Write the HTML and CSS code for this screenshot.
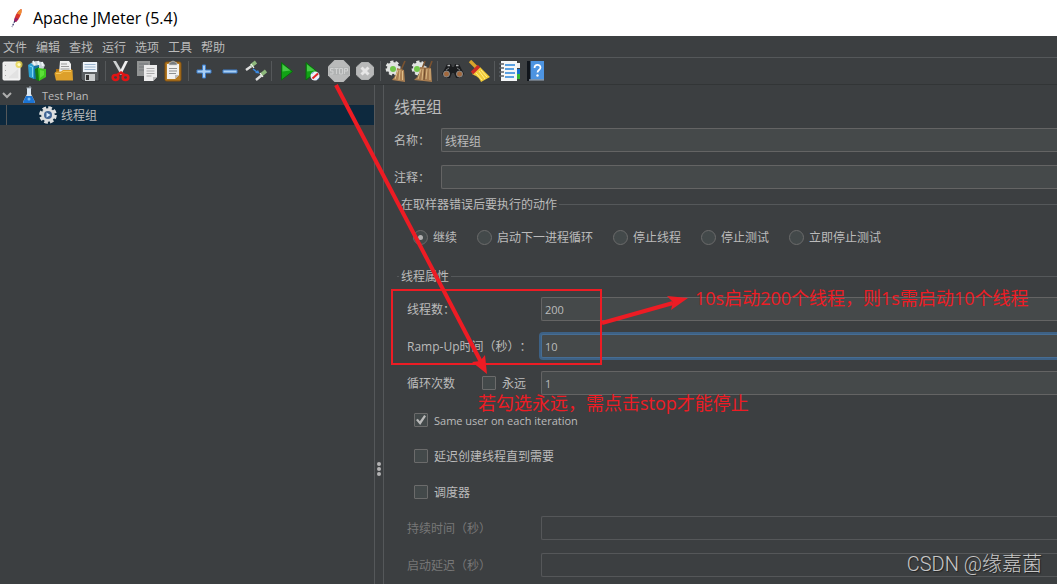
FILE: index.html
```html
<!DOCTYPE html>
<html lang="zh-CN">
<head>
<meta charset="utf-8">
<title>Apache JMeter (5.4)</title>
<link rel="stylesheet" href="styles.css">
</head>
<body>
<header class="titlebar">
  <svg class="feather" viewBox="0 0 14 22" aria-hidden="true">
    <path d="M11.5 2C8 3 5 8 4 14l2 1c3-3 6-8 5.500-13z" fill="#d8342c"/>
    <path d="M11.500 2c-2 .8-3.500 2.500-4.500 4.500l3.500 1.500c1-2 1.500-4 1-6z" fill="#ee8a32"/>
    <path d="M5 10.500 4 14l2 1 2.500-3z" fill="#982269"/>
    <path d="M4.800 14 2 20" stroke="#333066" stroke-width="1.200" stroke-dasharray="2 1"/>
  </svg>
  <h1 class="title">Apache JMeter (5.4)</h1>
</header>

<nav class="menubar">
  <button class="menu">文件</button>
  <button class="menu">编辑</button>
  <button class="menu">查找</button>
  <button class="menu">运行</button>
  <button class="menu">选项</button>
  <button class="menu">工具</button>
  <button class="menu">帮助</button>
</nav>

<div class="toolbar" role="toolbar">
  <button class="tool" aria-label="新建"><svg viewBox="0 0 22 22"><rect x="2" y="2" width="17" height="18" rx="1" fill="#ececec" stroke="#fafafa"/><path d="M4.500 5v13" stroke="#aaa" stroke-dasharray="1 4"/><path d="M8 17l9-8v9H8z" fill="#e2e2e2"/><circle cx="18" cy="4.500" r="3.500" fill="#e8d64a" opacity=".8"/><circle cx="18" cy="4.500" r="1.600" fill="#fffbc0"/></svg></button>
  <button class="tool" aria-label="模板"><svg viewBox="0 0 22 22"><path d="M4 3l5-2 6 1 3 3-2 5H3z" fill="#c9d3d8"/><path d="M6 1l2 4M11 1l1 4M15 2l1 4" stroke="#eef4f6" stroke-width="2"/><path d="M1 5l3-2 3 3v13l-5-2z" fill="#2b9fd0"/><path d="M7 6l5-1v14H7z" fill="#1672a2"/><path d="M2.500 6l3 1v10" fill="none" stroke="#7dd4f0"/><path d="M8 9l4-2v14l-3-1z" fill="#137913"/><path d="M11 8l8 1v8l-7 4z" fill="#3ec51f"/><path d="M13 10l4 1v4l-4 3z" fill="#5cdf38"/></svg></button>
  <button class="tool" aria-label="打开"><svg viewBox="0 0 22 22"><path d="M3 9h16v10H3z" fill="#a86e10"/><path d="M7 1h9l2 3v9H6z" fill="#eee"/><path d="M8 4h6M8 6.500h8M7.500 9h9" stroke="#999"/><path d="M1.500 14c0-1.500 1-2.500 2.500-2.500h4l2-1.500h9.500L20 20.500H3z" fill="#dda02a"/><path d="M3 13.500h5l2-2h8" fill="none" stroke="#f5c75c"/></svg></button>
  <button class="tool" aria-label="保存"><svg viewBox="0 0 22 22"><path d="M2 2h18v19H4l-2-2z" fill="#595d60" stroke="#303234"/><path d="M4 2h14v10H4z" fill="#edf3f9"/><path d="M5.500 4.500h11M5.500 7h11M5.500 9.500h11" stroke="#99b3cd"/><path d="M6 14h10v7H6z" fill="#c9cccd"/><path d="M7 15h3v5H7z" fill="#333"/></svg></button>
  <span class="sep"></span>
  <button class="tool" aria-label="剪切"><svg viewBox="0 0 22 22"><path d="M3 1h3l7 12-2 2z" fill="#cfd2d3"/><path d="M18 1h-3L9 13l2 2z" fill="#f0f0f0"/><g fill="none" stroke="#df1414" stroke-width="2.600"><ellipse cx="5.500" cy="17.500" rx="2.800" ry="2.500"/><ellipse cx="15.500" cy="17.500" rx="2.800" ry="2.500"/><path d="M7 15l4-2.500 3.500 2.500"/></g></svg></button>
  <button class="tool" aria-label="复制"><svg viewBox="0 0 22 22"><path d="M1 1h13v15H1z" fill="#929494"/><path d="M3 4h9M3 7h5M3 10h5" stroke="#73777a"/><path d="M8 5h13v12l-4 4H8z" fill="#ececec"/><path d="M10.500 8.500h8M10.500 11h8M10.500 13.500h8M10.500 16h5" stroke="#aaa"/><path d="M17 21v-4h4z" fill="#bbb"/></svg></button>
  <button class="tool" aria-label="粘贴"><svg viewBox="0 0 22 22"><rect x="3" y="2" width="16" height="19" rx="1.500" fill="#b57a21" stroke="#85520f"/><path d="M5 4h12v11l-4 4H5z" fill="#f0f0ee"/><path d="M7 8.500h8M7 11h8M7 13.500h7" stroke="#8d8f90"/><path d="M13 19v-4h4z" fill="#bbb"/><path d="M7 5V3l2-1q2-2 4 0l2 1v2z" fill="#777b7d" stroke="#d5d5d5" stroke-width=".6"/></svg></button>
  <span class="sep"></span>
  <button class="tool" aria-label="展开"><svg viewBox="0 0 22 22"><path d="M9.500 5h3v5H18v3h-5.500v5h-3v-5H4v-3h5.500z" fill="#a9cff3" stroke="#3d7cc8"/></svg></button>
  <button class="tool" aria-label="折叠"><svg viewBox="0 0 22 22"><path d="M4 10h14v3H4z" fill="#a9cff3" stroke="#3d7cc8"/></svg></button>
  <button class="tool" aria-label="切换"><svg viewBox="0 0 22 22"><path d="M1 10l7-5M11 20l6-5" stroke="#dedede" stroke-width="2.400"/><path d="M6 6l5-4M16 15l5-4" stroke="#8eb97c" stroke-width="3.600"/><path d="M6 4l3 4M15 13l3 4" stroke="#f2f2f2" stroke-width="1.200"/><path d="M8 9l4 3" stroke="#3a88e0" stroke-width="1.500"/><path d="M14.500 13.500l-4.500-.5 3-3z" fill="#3a88e0"/></svg></button>
  <span class="sep"></span>
  <button class="tool" aria-label="启动"><svg viewBox="0 0 22 22"><path d="M5.500 2.500l11 9L5.500 20z" fill="#11a315" stroke="#096b0d"/><path d="M6.500 4.500l8 6-8 1z" fill="#46c946"/></svg></button>
  <button class="tool" aria-label="无间隔启动"><svg viewBox="0 0 22 22"><path d="M4 2.500l11 9L4 20z" fill="#11a315" stroke="#096b0d"/><path d="M5 4.500l8 6-8 1z" fill="#46c946"/><circle cx="13" cy="16" r="4.500" fill="#e9eef9"/><path d="M10.500 18.500l5.500-5" stroke="#df2424" stroke-width="2"/><path d="M9.500 14l2-2M15 20l2-2" stroke="#568acf"/></svg></button>
  <button class="tool" aria-label="停止" disabled><svg viewBox="0 0 22 22"><path d="M6.500 0h9L22 6.500v9L15.500 22h-9L0 15.500v-9z" fill="#b9baba"/><path d="M1 7h20v8H1z" fill="#b1b3b3"/><g fill="none" stroke="#cfd0d0"><path d="M5.500 8.500h-3V11h2.500v3H2M6.500 8.500h4M8.500 8.500V14M11.500 8.500h3V14h-3zM16.500 14V8.500h3V11h-3"/></g></svg></button>
  <button class="tool" aria-label="关闭" disabled><svg viewBox="0 0 22 22"><path d="M7.500 2.500h7L19.500 7v8l-5 4.500h-7L2.500 15V7z" fill="#b8b9b9" stroke="#b0b2b2"/><path d="M7.500 7.500l7 7M14.500 7.500l-7 7" stroke="#e6e6e6" stroke-width="3"/></svg></button>
  <span class="sep"></span>
  <button class="tool" aria-label="清除"><svg viewBox="0 0 22 22"><circle cx="8" cy="8" r="6" fill="#e1e3e1" stroke="#e1e3e1" stroke-width="3" stroke-dasharray="3 2"/><circle cx="8" cy="9" r="3" fill="#72c64a"/><path d="M20 1l-4 9" stroke="#7b5330" stroke-width="1.600"/><path d="M12 8l7 2 1 12c-4-1-9-1-13-2 3-3 5-7 5-12z" fill="#ac8153"/><path d="M13 10l-3 9M15 10l-1 10M17.500 11v9" stroke="#dfbf89"/></svg></button>
  <button class="tool" aria-label="清除全部"><svg viewBox="0 0 22 22"><circle cx="8" cy="8" r="6" fill="#e1e3e1" stroke="#e1e3e1" stroke-width="3" stroke-dasharray="3 2"/><circle cx="6" cy="9" r="3" fill="#72c64a"/><path d="M14 1l-3 8M21 1l-3 8" stroke="#7b5330" stroke-width="1.600"/><path d="M9 7l11 1 1 14c-5-1-12-1-18-2 4-3 6-7 6-13z" fill="#a77c50"/><path d="M10 9l-3 10M12 9l-1 11M16 9l-1 10M19 9v11" stroke="#dcba84"/><path d="M14 8l-1 12" stroke="#6d4a2b"/></svg></button>
  <span class="sep"></span>
  <button class="tool" aria-label="查找"><svg viewBox="0 0 22 22"><path d="M5 4h4l1 3h2l1-3h4l5 10-4 4h-4l-2-5h-2l-2 5H4l-4-4z" fill="#1b1d1f"/><path d="M5.500 5.500h2.500M14 5.500h2.500" stroke="#b4b6b7" stroke-width="1.500"/><path d="M4 10l3-2M15 8l3 2" stroke="#777a7c"/><circle cx="4.500" cy="14" r="3" fill="#a2683c" stroke="#898b8c"/><circle cx="17.500" cy="14" r="3" fill="#a2683c" stroke="#898b8c"/></svg></button>
  <button class="tool" aria-label="重置查找"><svg viewBox="0 0 22 22"><path d="M2 1l7 7" stroke="#d9a32b" stroke-width="3.400"/><path d="M12 7l10 10-9 5c-2-5-5-6-9-8z" fill="#f1cb38"/><path d="M11 11l6 8M13 10l6 7M8 13l6 7" stroke="#fff08e"/><path d="M4 13l7-7" stroke="#cc2c25" stroke-width="3.500"/></svg></button>
  <span class="sep"></span>
  <button class="tool" aria-label="函数助手"><svg viewBox="0 0 22 22"><path d="M2 1h16v20H2z" fill="#f4f6f7"/><path d="M0 4h5M0 8h5M0 12h5M0 16h5" stroke="#5b6267" stroke-width="1.600"/><path d="M6 5h10M6 9h9M6 13h10M6 17h9" stroke="#2684dc" stroke-width="1.700"/><path d="M18 3h3v5h-3z" fill="#eee"/><path d="M18 9h3v5h-3z" fill="#1770cf"/><path d="M18 14h3v5h-3z" fill="#34b631"/></svg></button>
  <button class="tool" aria-label="帮助"><svg viewBox="0 0 22 22"><path d="M2 1h17v20H2z" fill="#10151b"/><path d="M5.500 1H19v18.500H5.500z" fill="#4d94e1"/><path d="M4 20h15" stroke="#c8d6e4"/><path d="M9.500 8c0-4 6-4 6-.5 0 2.500-3 2.500-3 5" fill="none" stroke="#fff" stroke-width="1.700"/><circle cx="12.500" cy="15.500" r="1.200" fill="#fff"/></svg></button>
</div>

<div class="workspace">
  <aside class="tree" role="tree">
    <div class="node" role="treeitem" aria-expanded="true">
      <svg class="chevron" viewBox="0 0 10 8" aria-hidden="true"><path d="M1 2l4 4 4-4" fill="none" stroke="#adadad" stroke-width="2"/></svg>
      <svg class="flask" viewBox="0 0 14 18" aria-hidden="true"><path d="M5 2h4v6l4 8q0 1-1 1H2q-1 0-1-1l4-8z" fill="#dce8f2"/><path d="M4 10h6l3 6q0 1-1 1H2q-1 0-1-1z" fill="#1c74d3"/><circle cx="7" cy="13" r="1.500" fill="#76bdf6"/><path d="M4.500 2h5M8 0v2" stroke="#a8b4bd"/></svg>
      <span class="latin">Test Plan</span>
    </div>
    <div class="node child" role="treeitem" aria-selected="true">
      <svg class="gear" viewBox="0 0 18 18" aria-hidden="true"><circle cx="9" cy="9" r="7" fill="none" stroke="#dedfdf" stroke-width="3.600" stroke-dasharray="3.500 2"/><circle cx="9" cy="9" r="6.800" fill="#dcdedf"/><circle cx="9" cy="9" r="4" fill="#426594"/><path d="M7.500 6.500l4 2.500-4 2.500z" fill="#d8ebff"/></svg>
      <span>线程组</span>
    </div>
  </aside>
  <div class="splitter" role="separator"><i></i><i></i><i></i></div>

  <main class="panel">
    <h2 class="heading">线程组</h2>
    <div class="meta">
      <label for="name">名称：</label><input class="text" id="name" type="text" value="线程组">
      <label for="comment">注释：</label><input class="text" id="comment" type="text">
    </div>

    <fieldset class="group">
      <legend>在取样器错误后要执行的动作</legend>
      <div class="radios">
        <label class="choice"><input class="radio" type="radio" name="onerror" checked><span>继续</span></label>
        <label class="choice"><input class="radio" type="radio" name="onerror"><span>启动下一进程循环</span></label>
        <label class="choice"><input class="radio" type="radio" name="onerror"><span>停止线程</span></label>
        <label class="choice"><input class="radio" type="radio" name="onerror"><span>停止测试</span></label>
        <label class="choice"><input class="radio" type="radio" name="onerror"><span>立即停止测试</span></label>
      </div>
    </fieldset>

    <fieldset class="group">
      <legend>线程属性</legend>
      <div class="fields">
        <label for="threads">线程数：</label><input class="text latin" id="threads" type="text" value="200">
        <label for="ramp">Ramp-Up时间（秒）：</label><input class="text latin active" id="ramp" type="text" value="10">
        <div class="loop">
          <label for="loops">循环次数</label>
          <label class="choice"><input class="check" type="checkbox"><span>永远</span></label>
        </div>
        <input class="text latin" id="loops" type="text" value="1">
      </div>
      <div class="checks">
        <label class="choice"><input class="check" type="checkbox" checked><span class="latin">Same user on each iteration</span></label>
        <label class="choice"><input class="check" type="checkbox"><span>延迟创建线程直到需要</span></label>
        <label class="choice"><input class="check" type="checkbox"><span>调度器</span></label>
      </div>
      <div class="fields off">
        <label for="duration">持续时间（秒）</label><input class="text" id="duration" type="text" disabled>
        <label for="delay">启动延迟（秒）</label><input class="text" id="delay" type="text" disabled>
      </div>
    </fieldset>
  </main>
</div>

<svg class="marks" aria-hidden="true">
  <g fill="none" stroke="#ed1c24">
    <path d="M336 85 481 362" stroke-width="4"/>
    <rect x="392" y="290" width="209" height="74" stroke-width="2"/>
    <path d="M602 323 673 303" stroke-width="4"/>
  </g>
  <g fill="#ed1c24">
    <path d="M487 374 472 362 480 361 485 355z"/>
    <path d="M688 298 667 296 673 302 671 310z"/>
  </g>
</svg>
<p class="note note-rate">10s启动200个线程，则1s需启动10个线程</p>
<p class="note note-stop">若勾选永远，需点击stop才能停止</p>
<p class="watermark">CSDN @缘嘉菌</p>
</body>
</html>
```
FILE: styles.css
```css
* {
  box-sizing: border-box;
}

body {
  position: relative;
  display: flex;
  flex-direction: column;
  height: 100vh;
  margin: 0;
  overflow: hidden;
  background: #3c3f41;
  color: #bbbbbb;
  font: 12px/16px "Open Sans", "Noto Sans CJK SC", sans-serif;
  text-spacing-trim: space-all;
}

button,
input {
  color: inherit;
  font: inherit;
}

.latin {
  font-size: 11px;
}

/* Window title */
.titlebar {
  display: flex;
  flex: none;
  align-items: center;
  gap: 9px;
  height: 36px;
  padding-left: 10px;
  background: #ffffff;
  color: #000000;
}

.feather {
  width: 14px;
  height: 22px;
}

.title {
  margin: 0;
  font-size: 16px;
  font-weight: 400;
  line-height: 20px;
}

/* Menu and toolbar */
.menubar {
  display: flex;
  flex: none;
  gap: 9px;
  height: 22px;
  padding: 2px 0 0 3px;
  border-bottom: 1px solid #55585a;
}

.menu,
.tool {
  padding: 0;
  border: 0;
  background: none;
}

.toolbar {
  display: flex;
  flex: none;
  align-items: center;
  height: 27px;
  margin-left: -1px;
  border-bottom: 1px solid #323536;
}

.tool {
  flex: none;
  width: 26px;
  height: 22px;
}

.tool svg {
  display: block;
  width: 22px;
  height: 22px;
  margin: 0 auto;
}

.sep {
  flex: none;
  width: 1px;
  height: 20px;
  margin: 0 2px;
  background: #55585a;
}

/* Tree */
.workspace {
  display: flex;
  flex: 1;
  min-height: 0;
}

.tree {
  flex: none;
  width: 374px;
}

.node {
  display: flex;
  align-items: center;
  height: 20px;
  padding-left: 2px;
}

.node span {
  padding-top: 2px;
}

.chevron {
  width: 10px;
  height: 8px;
  margin-right: 10px;
}

.flask {
  width: 14px;
  height: 18px;
  margin-right: 6px;
}

.child {
  margin-left: 6px;
  padding-left: 32px;
  border-left: 1px solid #55585a;
  background: #0d293e;
  box-shadow: -6px 0 #0d293e;
}

.gear {
  width: 18px;
  height: 18px;
  margin-right: 4px;
}

.splitter {
  display: flex;
  flex: none;
  flex-direction: column;
  align-items: center;
  justify-content: center;
  gap: 1px;
  width: 10px;
  padding-top: 268px;
  border: solid #55585a;
  border-width: 0 1px;
}

.splitter i {
  width: 4px;
  height: 4px;
  border-radius: 50%;
  background: #b4b4b4;
}

/* Thread group form */
.panel {
  flex: 1;
  min-width: 0;
  padding: 10px 0 0 10px;
  overflow: hidden;
}

.heading {
  margin: 0 0 9px;
  font-size: 16px;
  font-weight: 400;
  line-height: 24px;
}

.meta,
.fields {
  display: grid;
  align-items: center;
  gap: 13px 0;
}

.meta {
  grid-template-columns: 47px 1fr;
}

.fields {
  grid-template-columns: 134px 1fr;
  padding-left: 10px;
}

.meta > label,
.fields > label,
.loop > label:first-child,
.choice span {
  padding-top: 2px;
}

.text {
  width: 100%;
  min-width: 0;
  height: 24px;
  padding: 1px 3px 0;
  border: 1px solid #646464;
  border-right: 0;
  border-radius: 2px 0 0 2px;
  outline: 0;
  background: #45494a;
}

.active {
  border-color: #466d94;
  box-shadow: 0 0 0 2px #3d6185;
}

.text:disabled {
  border-color: #555759;
  background: #3c3f41;
}

.group {
  min-width: 0;
  margin: 6px 0 18px 3px;
  padding: 12px 0 0;
  border: 0 solid #55585a;
  border-top-width: 1px;
}

.group legend {
  margin-left: 2px;
  padding: 2px 2px 0;
}

.radios {
  display: flex;
  gap: 20px;
  height: 24px;
  padding-left: 16px;
}

.choice {
  display: flex;
  align-items: center;
  gap: 6px;
  white-space: nowrap;
}

.radios .choice {
  gap: 5px;
}

.radio,
.check {
  display: grid;
  flex: none;
  place-items: center;
  margin: 0;
  border: 1px solid #6b6b6b;
  background: #43494a;
  appearance: none;
}

.radio {
  width: 15px;
  height: 15px;
  border-radius: 50%;
}

.radio:checked::before {
  width: 5px;
  height: 5px;
  border-radius: 50%;
  background: #b0b0b0;
  content: "";
}

.check {
  width: 14px;
  height: 14px;
  border-radius: 1px;
}

.check:checked::before {
  width: 10px;
  height: 10px;
  background: #b8b8b8;
  clip-path: polygon(0 50%, 18% 38%, 38% 62%, 82% 0, 100% 12%, 42% 100%);
  content: "";
}

.loop {
  display: flex;
  align-items: center;
  gap: 27px;
}

.checks {
  display: grid;
  gap: 12px;
  padding: 13px 0 12px 17px;
}

.checks .choice {
  height: 24px;
}

.off {
  color: #777777;
}

/* Annotations drawn over the window */
.marks {
  position: absolute;
  inset: 0;
  width: 100%;
  height: 100%;
  pointer-events: none;
}

.note,
.watermark {
  position: absolute;
  margin: 0;
  white-space: nowrap;
}

.note {
  color: #ed1c24;
  font-size: 18px;
  line-height: 18px;
}

.note-rate {
  top: 289px;
  left: 695px;
}

.note-stop {
  top: 394px;
  left: 478px;
}

.watermark {
  right: 15px;
  bottom: 8px;
  color: #c8c8c8;
  font-family: Roboto, "Noto Sans CJK SC", sans-serif;
  font-size: 20px;
  font-weight: 300;
  line-height: 24px;
  text-shadow: 1px 1px 1px #222222;
}
```
